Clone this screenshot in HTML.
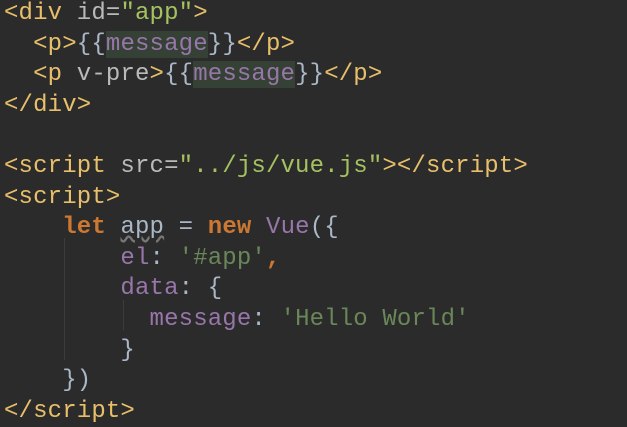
<!DOCTYPE html>
<html><head><style>
body{margin:0;background:#2b2b2b;width:627px;height:420px;overflow:hidden}
pre{margin:0;position:absolute;left:4px;top:-1px;font:24px/30.6px "Liberation Mono","DejaVu Sans Mono",monospace;color:#a9b7c6;letter-spacing:0.15px}
.t{color:#e8bf6a}.a{color:#bababa}.s{color:#a5c261}.p{color:#9876aa}.k{color:#cc7832;font-weight:bold}.g{color:#6a8759}.h{background:#344134}
.u{text-decoration:underline wavy #777;color:#a9b7c6}
.v{position:absolute;width:1px;background:#3c3c3c}
</style></head><body>
<div class="v" style="left:64px;top:238px;height:122px"></div>
<div class="v" style="left:123px;top:300px;height:30px"></div>
<pre><span class="t">&lt;div </span><span class="a">id=</span><span class="s">"app"</span><span class="t">&gt;</span>
  <span class="t">&lt;p&gt;</span>{{<span class="p h">message</span>}}<span class="t">&lt;/p&gt;</span>
  <span class="t">&lt;p </span><span class="a">v-pre</span><span class="t">&gt;</span>{{<span class="p h">message</span>}}<span class="t">&lt;/p&gt;</span>
<span class="t">&lt;/div&gt;</span>

<span class="t">&lt;script </span><span class="a">src=</span><span class="s">"../js/vue.js"</span><span class="t">&gt;&lt;/script&gt;</span>
<span class="t">&lt;script&gt;</span>
    <span class="k">let</span> <span class="u">app</span> = <span class="k">new</span> <span class="p">Vue</span>({
        <span class="p">el</span>: <span class="g">'#app'</span><span class="k">,</span>
        <span class="p">data</span>: {
          <span class="p">message</span>: <span class="g">'Hello World'</span>
        }
    })
<span class="t">&lt;/script&gt;</span></pre>
</body></html>
